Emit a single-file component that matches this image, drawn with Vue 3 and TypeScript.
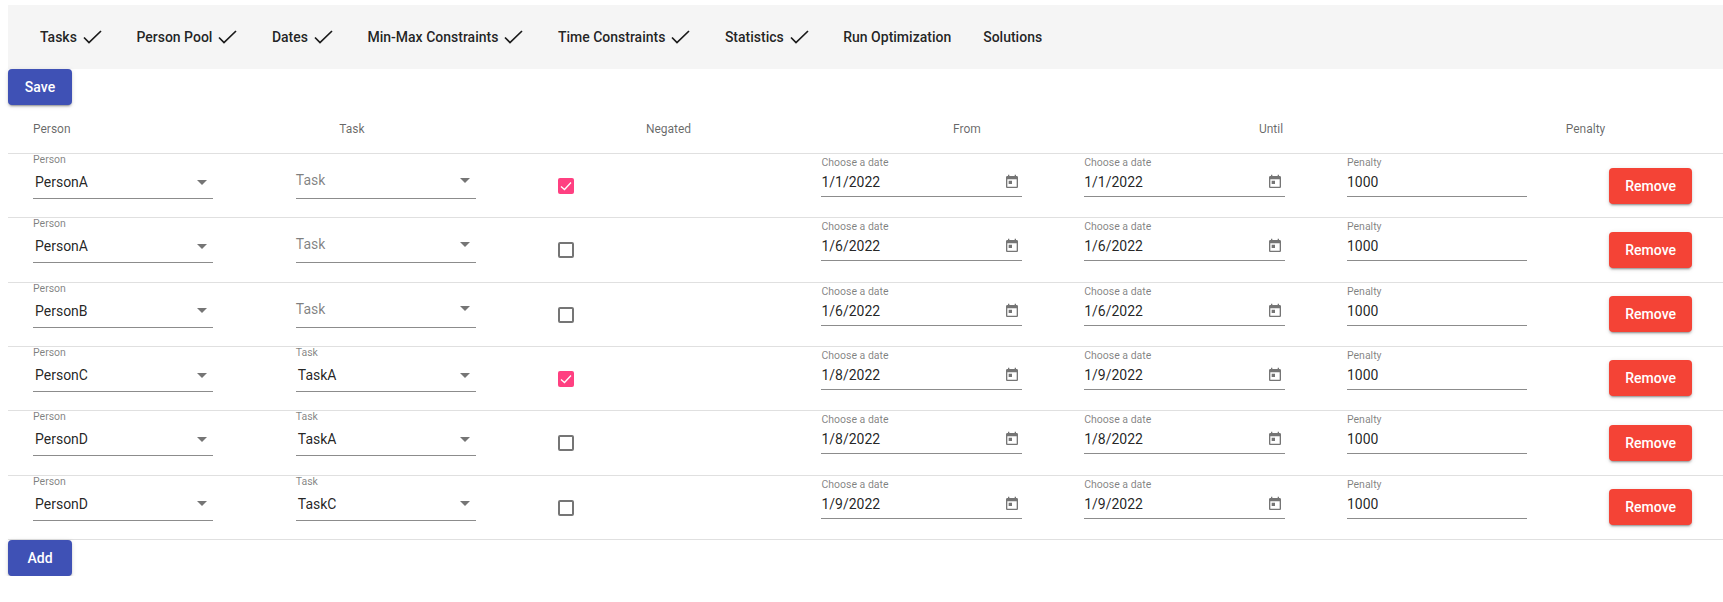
<script setup lang="ts">
// Constraint table: one row per time constraint
interface ConstraintRow {
  person: string
  task: string
  negated: boolean
  from: string
  until: string
  penalty: number
}

const navItems = [
  { label: 'Tasks', done: true },
  { label: 'Person Pool', done: true },
  { label: 'Dates', done: true },
  { label: 'Min-Max Constraints', done: true },
  { label: 'Time Constraints', done: true },
  { label: 'Statistics', done: true },
  { label: 'Run Optimization', done: false },
  { label: 'Solutions', done: false }
]

const headers = ['Person', 'Task', 'Negated', 'From', 'Until', 'Penalty']

const rows: ConstraintRow[] = [
  { person: 'PersonA', task: '', negated: true, from: '1/1/2022', until: '1/1/2022', penalty: 1000 },
  { person: 'PersonA', task: '', negated: false, from: '1/6/2022', until: '1/6/2022', penalty: 1000 },
  { person: 'PersonB', task: '', negated: false, from: '1/6/2022', until: '1/6/2022', penalty: 1000 },
  { person: 'PersonC', task: 'TaskA', negated: true, from: '1/8/2022', until: '1/9/2022', penalty: 1000 },
  { person: 'PersonD', task: 'TaskA', negated: false, from: '1/8/2022', until: '1/8/2022', penalty: 1000 },
  { person: 'PersonD', task: 'TaskC', negated: false, from: '1/9/2022', until: '1/9/2022', penalty: 1000 }
]
</script>

<template>
  <div class="page">
    <nav class="nav">
      <a v-for="item in navItems" :key="item.label" class="nav-link">
        {{ item.label }}
        <svg v-if="item.done" class="nav-check" viewBox="0 0 19 14" width="19" height="14">
          <path d="M1 7.5 L6 12.5 L18 1" fill="none" stroke="#1a1a1a" stroke-width="1.7" />
        </svg>
      </a>
    </nav>

    <button class="btn btn-primary">Save</button>

    <div class="table">
      <div class="head">
        <div v-for="h in headers" :key="h" class="head-cell">{{ h }}</div>
      </div>

      <div v-for="(row, i) in rows" :key="i" class="row">
        <div class="field select-field">
          <label class="float-label">Person</label>
          <div class="control">
            <span class="value">{{ row.person }}</span>
            <span class="arrow"></span>
          </div>
        </div>

        <div class="field select-field">
          <label v-if="row.task" class="float-label">Task</label>
          <div class="control" :class="{ empty: !row.task }">
            <span v-if="row.task" class="value">{{ row.task }}</span>
            <span v-else class="placeholder">Task</span>
            <span class="arrow"></span>
          </div>
        </div>

        <div class="check-cell">
          <span class="checkbox" :class="{ checked: row.negated }">
            <svg v-if="row.negated" viewBox="0 0 16 16" width="16" height="16">
              <path d="M3 8.5 L6.5 11.5 L13 4.5" fill="none" stroke="#fff" stroke-width="1.3" />
            </svg>
          </span>
        </div>

        <div class="field input-field date-field">
          <label class="float-label">Choose a date</label>
          <div class="control">
            <span>{{ row.from }}</span>
            <svg class="cal" viewBox="0 0 24 24" width="16" height="16">
              <path d="M19 3h-1V1h-2v2H8V1H6v2H5c-1.11 0-1.99.9-1.99 2L3 19c0 1.1.89 2 2 2h14c1.1 0 2-.9 2-2V5c0-1.1-.9-2-2-2zm0 16H5V8h14v11zM7 10h5v5H7z" />
            </svg>
          </div>
        </div>

        <div class="field input-field date-field">
          <label class="float-label">Choose a date</label>
          <div class="control">
            <span>{{ row.until }}</span>
            <svg class="cal" viewBox="0 0 24 24" width="16" height="16">
              <path d="M19 3h-1V1h-2v2H8V1H6v2H5c-1.11 0-1.99.9-1.99 2L3 19c0 1.1.89 2 2 2h14c1.1 0 2-.9 2-2V5c0-1.1-.9-2-2-2zm0 16H5V8h14v11zM7 10h5v5H7z" />
            </svg>
          </div>
        </div>

        <div class="field input-field">
          <label class="float-label">Penalty</label>
          <div class="control">
            <span>{{ row.penalty }}</span>
          </div>
        </div>

        <div class="action-cell">
          <button class="btn btn-warn">Remove</button>
        </div>
      </div>
    </div>

    <button class="btn btn-primary">Add</button>
  </div>
</template>

<style>
body {
  background: #fff;
}
</style>

<style scoped>
.page {
  box-sizing: border-box;
  width: 1723px;
  padding: 5px 0 0 8px;
  font-family: Roboto, "Liberation Sans", sans-serif;
  font-size: 14px;
  color: rgba(0, 0, 0, 0.87);
}

.nav {
  box-sizing: border-box;
  display: flex;
  align-items: center;
  gap: 32px;
  height: 64px;
  padding: 0 0 1px 32px;
  background: #f5f5f5;
}

.nav-link {
  display: flex;
  align-items: center;
  gap: 6px;
  font-weight: 500;
}

.nav-check {
  margin-top: 1px;
  margin-right: 2.5px;
}

.btn {
  display: block;
  height: 36px;
  min-width: 64px;
  padding: 0 16.5px;
  border: none;
  border-radius: 4px;
  color: #fff;
  font: 500 14px Roboto, "Liberation Sans", sans-serif;
  box-shadow: 0 3px 1px -2px rgba(0, 0, 0, 0.2), 0 2px 2px 0 rgba(0, 0, 0, 0.14), 0 1px 5px 0 rgba(0, 0, 0, 0.12);
}

.btn-primary {
  background: #3f51b5;
}

.btn-warn {
  background: #f44336;
}

.head {
  box-sizing: border-box;
  display: grid;
  grid-template-columns: 170px 298px 335px 262px 346px 279px;
  align-items: center;
  height: 49px;
  padding-left: 25px;
  border-bottom: 1px solid #e0e0e0;
  font-size: 12px;
  font-weight: 400;
  color: rgba(0, 0, 0, 0.6);
}

.head-cell {
  text-align: center;
}

.head-cell:first-child {
  text-align: left;
}

.head-cell:last-child {
  padding-left: 4px;
}

.row {
  box-sizing: border-box;
  display: grid;
  grid-template-columns: repeat(6, 262.8px) 1fr;
  align-items: start;
  height: 64.33px;
  padding-left: 25px;
  border-bottom: 1px solid #e0e0e0;
}

.field {
  display: flex;
  flex-direction: column;
  width: 180px;
}

.float-label {
  height: 12px;
  font-size: 10.5px;
  line-height: 12px;
  color: rgba(0, 0, 0, 0.5);
}

.control {
  display: flex;
  align-items: center;
  justify-content: space-between;
  box-sizing: border-box;
  border-bottom: 1px solid #8c8c8c;
}

.select-field .control {
  height: 33px;
  padding: 0.3px 6px 0 2px;
}

.select-field .control.empty {
  height: 45px;
  padding-top: 8px;
  padding-left: 0;
}

.placeholder {
  color: rgba(0, 0, 0, 0.5);
}

.arrow {
  width: 0;
  height: 0;
  border-left: 5px solid transparent;
  border-right: 5px solid transparent;
  border-top: 5px solid rgba(0, 0, 0, 0.54);
}

.input-field {
  padding-top: 3px;
}

.input-field .control {
  height: 28px;
  padding-bottom: 1px;
}

.date-field {
  width: 201px;
}

.cal {
  margin-right: 2.5px;
  fill: rgba(0, 0, 0, 0.54);
}

.check-cell {
  margin-left: -1px;
  padding-top: 24px;
}

.checkbox {
  display: block;
  box-sizing: border-box;
  width: 16px;
  height: 16px;
  border: 2px solid rgba(0, 0, 0, 0.54);
  border-radius: 2px;
}

.checkbox.checked {
  border: none;
  background: #ff4081;
}

.checkbox svg {
  display: block;
}

.action-cell {
  margin-left: -1px;
  padding-top: 13.5px;
}
</style>
